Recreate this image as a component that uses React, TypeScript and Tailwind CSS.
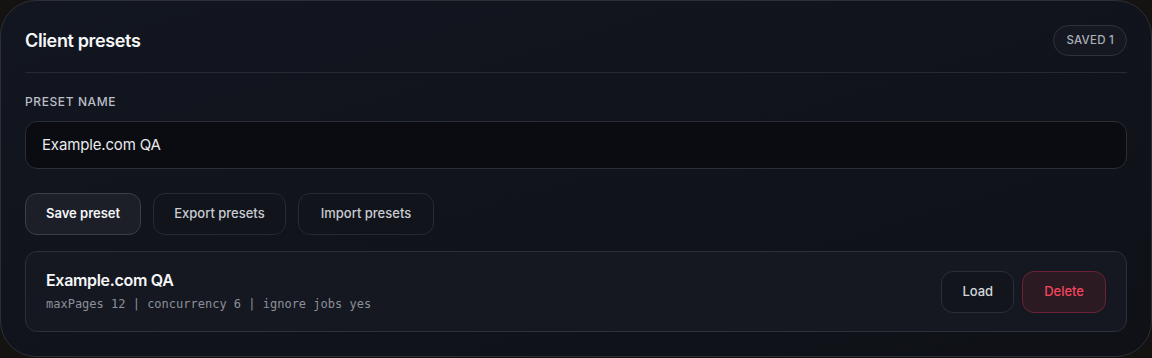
import React from "react";

export default function App() {
  return (
    <div className="min-h-[358px] w-[1152px] bg-[#151312]" style={{ fontFamily: "Inter, 'Noto Sans', sans-serif" }}>
      <div className="h-[357px] rounded-[36px] border border-[#2c2f36] bg-gradient-to-br from-[#121620] to-[#0f1117] px-6 pt-6">
        <div className="flex items-center justify-between pb-4 border-b border-[#262a32]">
          <h2 className="text-[18px] leading-[31px] font-semibold tracking-[-0.02em] text-[#f5f6f8]">Client presets</h2>
          <span className="flex h-[31px] items-center rounded-full border border-[#2e323a] bg-[#151820] px-3 text-[11.5px] font-medium tracking-[0.02em] text-[#a9aeb7]">
            SAVED 1
          </span>
        </div>
        <div className="pt-5">
          <label className="block text-[12px] leading-[18px] font-medium tracking-[0.05em] text-[#b9bec7]">PRESET NAME</label>
          <div className="mt-[10px] flex h-[48px] items-center rounded-xl border border-[#2a2e36] bg-[#0a0c11] px-4 text-[15px] tracking-[-0.01em] text-[#e8eaee]">
            Example.com QA
          </div>
          <div className="mt-6 flex gap-3">
            <button className="h-[42px] rounded-xl border border-[#3a3e47] bg-[#1c1f27] px-5 text-[13px] font-semibold text-[#f5f6f8]">
              Save preset
            </button>
            <button className="h-[42px] rounded-xl border border-[#262a32] bg-[#11141b] px-5 text-[13px] font-medium text-[#c9ccd2]">
              Export presets
            </button>
            <button className="h-[42px] rounded-xl border border-[#262a32] bg-[#11141b] px-[22px] text-[13px] font-medium text-[#c9ccd2]">
              Import presets
            </button>
          </div>
          <div className="mt-4 flex h-[81px] items-center justify-between rounded-xl border border-[#2c3039] bg-[#151820] px-5">
            <div className="pb-1">
              <div className="text-[16px] leading-6 font-semibold tracking-[-0.02em] text-[#f5f6f8]">Example.com QA</div>
              <div className="mt-1 text-[12px] leading-4 text-[#8b909a]" style={{ fontFamily: "'DejaVu Sans Mono', monospace" }}>
                maxPages 12 | concurrency 6 | ignore jobs yes
              </div>
            </div>
            <div className="flex gap-2">
              <button className="h-[42px] rounded-xl border border-[#2a2e36] bg-[#12151c] px-5 text-[13px] font-medium text-[#d3d6db]">
                Load
              </button>
              <button className="h-[42px] rounded-xl border border-[#6a2335] bg-[#2b1a22] px-[21px] text-[13px] font-medium text-[#f2455f]">
                Delete
              </button>
            </div>
          </div>
        </div>
      </div>
    </div>
  );
}
